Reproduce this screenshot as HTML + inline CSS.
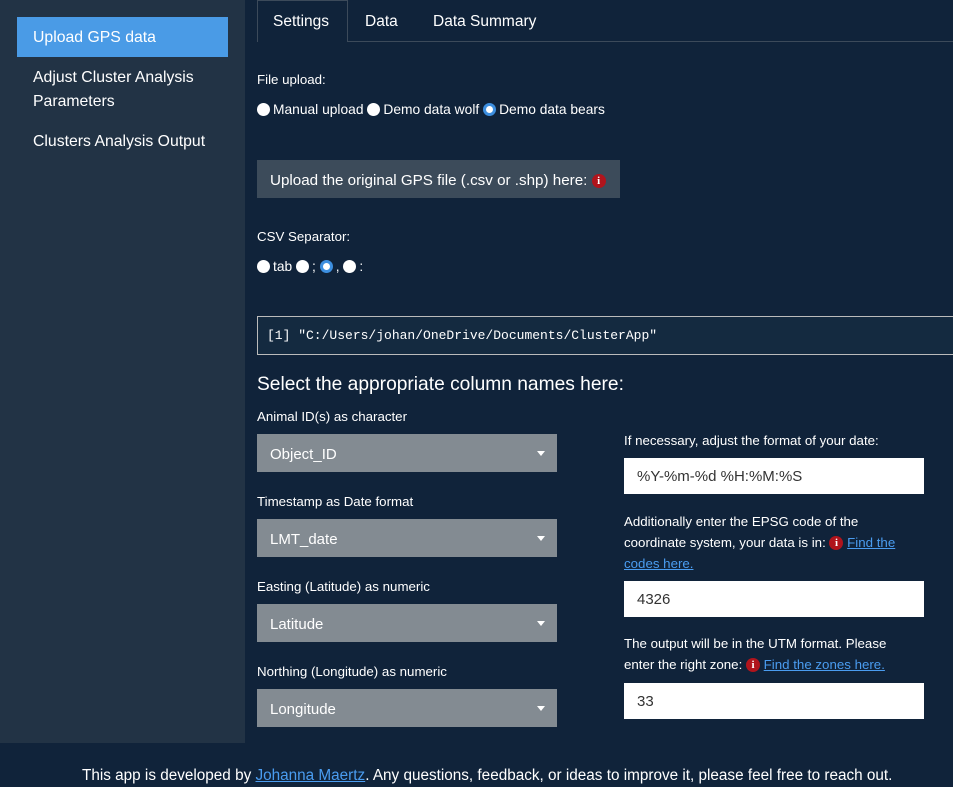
<!DOCTYPE html>
<html><head><meta charset="utf-8"><style>
*{box-sizing:border-box;margin:0;padding:0}
body{width:953px;height:787px;background:#10233a;font-family:"Liberation Sans",sans-serif;color:#fff;position:relative;overflow:hidden;font-size:13px}
.a{position:absolute;white-space:nowrap}
#side{position:absolute;left:0;top:0;width:245px;height:743px;background:#223345}
.nav{position:absolute;left:33px;font-size:15.8px;color:#fff}
.sel{position:absolute;left:257px;width:300px;height:38px;background:#838b92;color:#fff;font-size:15px;padding:12px 13px 0}
.sel:after{content:"";position:absolute;right:12px;top:17px;border-left:4px solid transparent;border-right:4px solid transparent;border-top:5px solid #fff}
.inp{position:absolute;left:624px;width:300px;height:36px;background:#fff;color:#333;font-size:15px;padding:10px 13px 0}
.lbl{position:absolute;left:257px;font-size:13.3px}
.rad{display:inline-block;width:13px;height:13px;border-radius:50%;background:#fff;vertical-align:-2px;margin-right:3px}
.rad.on{background:#fff;border:3.5px solid #3d8fe0}
.info{display:inline-block;width:14px;height:14px;border-radius:50%;background:#b0141c;color:#fff;font-size:11px;font-weight:bold;text-align:center;line-height:14px;vertical-align:1px;font-family:"Liberation Serif",serif}
a{color:#4a9cf0;text-decoration:underline}
</style></head><body>
<div id="side"></div>
<div class="a" style="left:17px;top:17px;width:211px;height:40px;background:#4a9be6"></div>
<div class="nav" style="top:29px">Upload GPS data</div>
<div class="nav" style="top:69px">Adjust Cluster Analysis</div>
<div class="nav" style="top:93px">Parameters</div>
<div class="nav" style="top:133px">Clusters Analysis Output</div>

<div class="a" style="left:257px;top:41px;width:696px;height:1px;background:#3c4a5a"></div>
<div class="a" style="left:257px;top:0;width:91px;height:42px;border:1px solid #3c4a5a;border-bottom:none;background:#10233a"></div>
<div class="a" style="left:273px;top:13px;font-size:15.5px">Settings</div>
<div class="a" style="left:365px;top:13px;font-size:15.5px">Data</div>
<div class="a" style="left:433px;top:13px;font-size:15.5px">Data Summary</div>

<div class="lbl" style="top:72px">File upload:</div>
<div class="lbl" style="top:102px;font-size:13.8px"><span class="rad"></span>Manual upload <span class="rad"></span>Demo data wolf <span class="rad on"></span>Demo data bears</div>

<div class="a" style="left:257px;top:160px;width:363px;height:38px;background:#3c4b5a;font-size:15.2px;padding:12px 13px 0">Upload the original GPS file (.csv or .shp) here: <span class="info">i</span></div>

<div class="lbl" style="top:229px">CSV Separator:</div>
<div class="lbl" style="top:259px;font-size:13.8px"><span class="rad"></span>tab <span class="rad"></span>; <span class="rad on"></span>, <span class="rad"></span>:</div>

<div class="a" style="left:257px;top:316px;width:700px;height:39px;border:1px solid #bbb;background:#142a40;font-family:'Liberation Mono',monospace;font-size:13px;padding:11px 9px 0">[1] "C:/Users/johan/OneDrive/Documents/ClusterApp"</div>

<div class="a" style="left:257px;top:374px;font-size:19.2px">Select the appropriate column names here:</div>

<div class="lbl" style="top:409px">Animal ID(s) as character</div>
<div class="sel" style="top:434px">Object_ID</div>
<div class="lbl" style="top:494px">Timestamp as Date format</div>
<div class="sel" style="top:519px">LMT_date</div>
<div class="lbl" style="top:579px">Easting (Latitude) as numeric</div>
<div class="sel" style="top:604px">Latitude</div>
<div class="lbl" style="top:664px">Northing (Longitude) as numeric</div>
<div class="sel" style="top:689px">Longitude</div>

<div class="a" style="left:624px;top:433px;font-size:13.3px">If necessary, adjust the format of your date:</div>
<div class="inp" style="top:458px">%Y-%m-%d %H:%M:%S</div>
<div class="a" style="left:624px;top:511px;font-size:13.3px;line-height:21px">Additionally enter the EPSG code of the<br>coordinate system, your data is in: <span class="info">i</span> <a>Find the</a><br><a>codes here.</a></div>
<div class="inp" style="top:581px">4326</div>
<div class="a" style="left:624px;top:633px;font-size:13.3px;line-height:21px">The output will be in the UTM format. Please<br>enter the right zone: <span class="info">i</span> <a>Find the zones here.</a></div>
<div class="inp" style="top:683px">33</div>

<div class="a" style="left:82px;top:767px;font-size:15.3px">This app is developed by <a>Johanna Maertz</a>. Any questions, feedback, or ideas to improve it, please feel free to reach out.</div>
</body></html>
